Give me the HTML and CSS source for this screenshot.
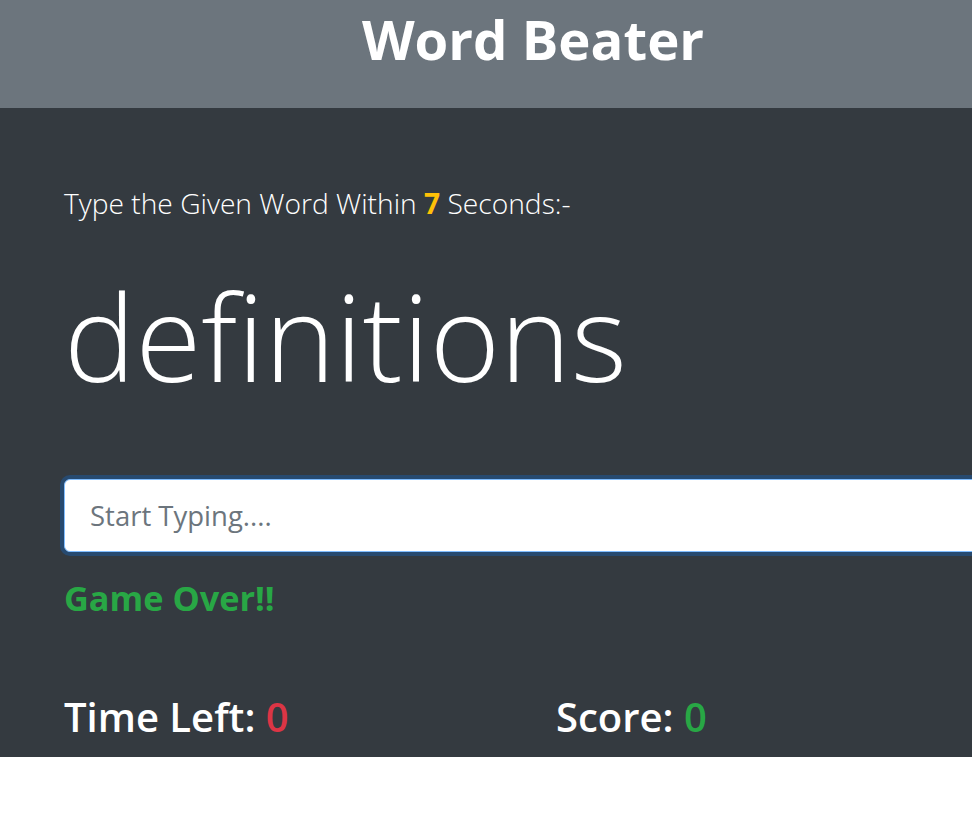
FILE: index.html
```html
<!DOCTYPE html>
<html lang="en">
<head>
<meta charset="utf-8">
<title>Word Beater</title>
<link rel="stylesheet" href="styles.css">
</head>
<body>
<div class="page">
  <header class="top">
    <h1 class="title">Word Beater</h1>
  </header>
  <main class="board">
    <p class="lead">Type the Given Word Within <span class="secs">7</span> Seconds:-</p>
    <h2 class="word">definitions</h2>
    <input class="typing" type="text" placeholder="Start Typing....">
    <h4 class="message">Game Over!!</h4>
    <div class="stats">
      <h3 class="stat">Time Left: <span class="time">0</span></h3>
      <h3 class="stat">Score: <span class="score">0</span></h3>
    </div>
  </main>
</div>
</body>
</html>
```
FILE: styles.css
```css
html {
  overflow-x: hidden;
}
body {
  margin: 0;
  background: #ffffff;
  font-family: "Open Sans", "Noto Sans", sans-serif;
  color: #ffffff;
}
.page {
  width: 1066px;
}
.top {
  background: #6c757d;
  height: 108px;
  box-sizing: border-box;
  padding-top: 3px;
}
.title {
  margin: 0;
  text-align: center;
  font-size: 54.5px;
  line-height: 72px;
  font-weight: 700;
  color: #ffffff;
}
.board {
  background: #343a40;
  padding: 77px 64px 15px;
}
.lead {
  margin: 0;
  font-size: 28.2px;
  line-height: 36px;
  font-weight: 300;
}
.secs {
  font-weight: 700;
  color: #ffc107;
}
.word {
  margin: 45px 0 0;
  font-size: 120px;
  line-height: 140px;
  font-weight: 300;
}
.typing {
  display: block;
  margin-top: 73px;
  width: 938px;
  height: 73px;
  box-sizing: border-box;
  padding: 0 25px;
  border: 1px solid #80bdff;
  border-radius: 6px;
  box-shadow: 0 0 0 4px rgba(0, 123, 255, 0.25);
  background: #ffffff;
  font-family: "Open Sans", "Noto Sans", sans-serif;
  font-size: 27.5px;
  color: #495057;
  outline: none;
}
.typing::placeholder {
  color: #6c757d;
  opacity: 1;
}
.message {
  margin: 26px 0 0;
  font-size: 34.3px;
  line-height: 40px;
  font-weight: 700;
  color: #28a745;
}
.stats {
  margin-top: 74px;
  display: grid;
  grid-template-columns: 1fr 1fr;
  column-gap: 46px;
}
.stat {
  margin: 0;
  font-size: 40px;
  line-height: 50px;
  font-weight: 600;
}
.time {
  color: #dc3545;
}
.score {
  color: #28a745;
}
```
